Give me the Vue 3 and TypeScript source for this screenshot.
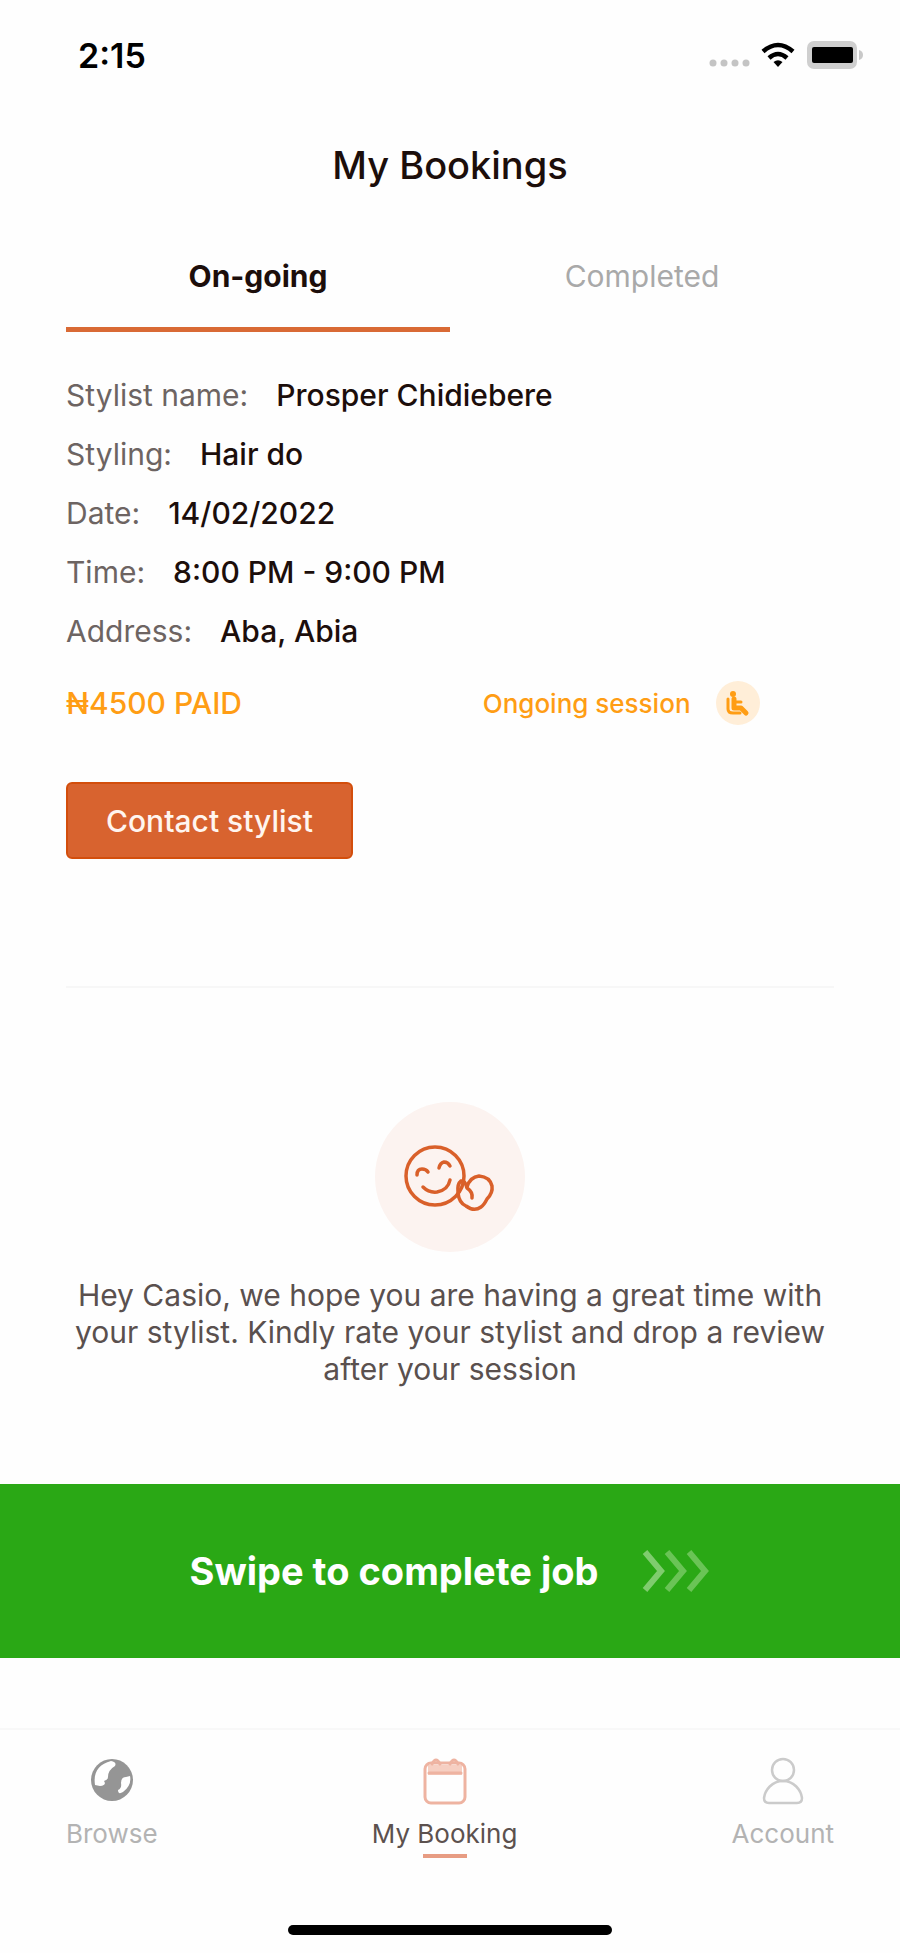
<script setup lang="ts">
import { ref } from 'vue'

interface Detail {
  label: string
  value: string
}

const tabs = ['On-going', 'Completed']
const activeTab = ref('On-going')

const details: Detail[] = [
  { label: 'Stylist name:', value: 'Prosper Chidiebere' },
  { label: 'Styling:', value: 'Hair do' },
  { label: 'Date:', value: '14/02/2022' },
  { label: 'Time:', value: '8:00 PM - 9:00 PM' },
  { label: 'Address:', value: 'Aba, Abia' },
]
</script>

<template>
  <div class="screen">
    <header class="status-bar">
      <span class="clock">2:15</span>
      <div class="status-icons">
        <svg width="42" height="26" viewBox="0 0 42 26" aria-hidden="true">
          <g fill="#c4c4c4">
            <circle cx="5" cy="21" r="3.500" /><circle cx="16" cy="21" r="3.500" />
            <circle cx="27" cy="21" r="3.500" /><circle cx="38" cy="21" r="3.500" />
          </g>
        </svg>
        <svg width="34" height="26" viewBox="0 0 34 26" aria-hidden="true">
          <g fill="none" stroke="#000" stroke-width="4.500">
            <path d="M2 9.500Q17-3.500 32 9.500" />
            <path d="M8 16Q17 8 26 16" />
          </g>
          <path d="M12.500 20Q17 16.500 21.500 20L17 25Z" />
        </svg>
        <svg width="58" height="30" viewBox="0 0 58 30" aria-hidden="true">
          <rect x="1" y="1" width="50" height="28" rx="7" fill="#cfcfcf" />
          <rect x="6" y="7" width="41" height="16" rx="2" fill="#000" />
          <path d="M53 10Q57 11 57 15T53 20Z" fill="#c9c9c9" />
        </svg>
      </div>
    </header>

    <h1 class="title">My Bookings</h1>

    <main class="content">
      <div class="tabs" role="tablist">
        <button
          v-for="tab in tabs"
          :key="tab"
          type="button"
          role="tab"
          class="tab"
          :class="{ active: tab === activeTab }"
          :aria-selected="tab === activeTab"
          @click="activeTab = tab"
        >
          {{ tab }}
        </button>
      </div>

      <dl class="details">
        <div v-for="d in details" :key="d.label" class="detail">
          <dt>{{ d.label }}</dt>
          <dd>{{ d.value }}</dd>
        </div>
      </dl>

      <div class="payment">
        <span class="paid">₦4500 PAID</span>
        <span class="session">
          Ongoing session
          <svg width="46" height="46" viewBox="0 0 46 46" aria-hidden="true">
            <circle cx="23" cy="23" r="22" fill="#ffeed8" />
            <g fill="none" stroke="#ff9d14" stroke-linecap="round" stroke-linejoin="round">
              <path d="M13 19V29Q13 33 18 33H25" stroke-width="3" />
              <path d="M19 19V28H26L31 33" stroke-width="5" />
              <path d="M20 22H26" stroke-width="3" />
            </g>
            <circle cx="18" cy="14" r="3" fill="#ff9d14" />
          </svg>
        </span>
      </div>

      <button type="button" class="contact">Contact stylist</button>

      <hr class="divider" />

      <section class="review">
        <svg width="150" height="150" viewBox="0 0 150 150" aria-hidden="true">
          <circle cx="75" cy="75" r="75" fill="#fcf3f0" />
          <g fill="none" stroke="#d9602a" stroke-width="3.500" stroke-linecap="round" stroke-linejoin="round">
            <circle cx="60" cy="74" r="29" />
            <path d="M42 73Q42 67 47 67Q51 67 53 70" />
            <path d="M64 66Q65 61 69 60Q73 60 75 64" />
            <path d="M48 85Q54 91 62 90Q73 88 75 78" />
            <path d="M97 96Q98 90 92 86Q90 78 86 79Q82 82 83 91Q84 101 91 104Q99 110 106 105Q109 103 112 97Q118 91 117 84Q115 75 104 74Q95 75 92 85" />
          </g>
        </svg>
        <p>Hey Casio, we hope you are having a great time with your stylist. Kindly rate your stylist and drop a review after your session</p>
      </section>
    </main>

    <button type="button" class="swipe">
      Swipe to complete job
      <svg width="68" height="46" viewBox="0 0 68 46" aria-hidden="true">
        <g fill="none" stroke-width="6">
          <path d="M3 4L19 23L3 42" stroke="#7fcc6e" />
          <path d="M25 4L41 23L25 42" stroke="#6ac456" />
          <path d="M47 4L63 23L47 42" stroke="#6ac456" />
        </g>
      </svg>
    </button>

    <nav class="bottom-nav" aria-label="Main">
      <a href="#browse" class="nav-item">
        <svg width="44" height="48" viewBox="0 0 44 48" aria-hidden="true">
          <circle cx="22" cy="23" r="21" fill="#959595" />
          <path d="M5 28C3 15 9 7 21 4Q27 5 25 9Q18 13 18 20Q18 23 14 24Q17 28 10 29Z" fill="#fff" />
          <path d="M40 19Q42 28 33 35Q28 38 28 33Q32 31 31 26Q31 20 36 20Z" fill="#fff" />
        </svg>
        <span>Browse</span>
      </a>
      <a href="#bookings" class="nav-item current" aria-current="page">
        <svg width="44" height="48" viewBox="0 0 44 48" aria-hidden="true">
          <path d="M5 8H39V18H5Z" fill="#f6cfc2" />
          <g fill="none" stroke="#eeb3a1" stroke-width="3" stroke-linecap="round" stroke-linejoin="round">
            <rect x="2" y="6" width="40" height="40" rx="6" />
            <path d="M9 7Q13-1 17 7M27 7Q31-1 35 7M6 16H38" />
          </g>
        </svg>
        <span>My Booking</span>
      </a>
      <a href="#account" class="nav-item">
        <svg width="44" height="48" viewBox="0 0 44 48" aria-hidden="true">
          <g fill="none" stroke="#cbcbcb" stroke-width="2.500">
            <circle cx="22" cy="13" r="11" />
            <path d="M22 24C11 24 4 33 3 41Q3 46 8 46H36Q41 46 41 41C40 33 33 24 22 24Z" />
          </g>
        </svg>
        <span>Account</span>
      </a>
    </nav>

    <div class="home-indicator"></div>
  </div>
</template>

<style>
body {
  background: #fefefe;
}
</style>

<style scoped>
.screen {
  display: flex;
  flex-direction: column;
  font-family: Inter, "Liberation Sans", sans-serif;
  font-size: 30px;
  color: #1c0e0b;
}

button {
  font: inherit;
  border: 0;
  background: none;
  cursor: pointer;
}

.status-bar {
  display: flex;
  align-items: center;
  justify-content: space-between;
  height: 46px;
  margin-top: 32px;
  padding: 0 36px 0 78px;
}

.clock {
  font-size: 34px;
  font-weight: 600;
  color: #000;
}

.status-icons {
  display: flex;
  align-items: center;
  gap: 11px;
}

.title {
  margin: 62px 0 0;
  font-size: 38px;
  line-height: 50px;
  font-weight: 500;
  text-align: center;
}

.content {
  padding: 0 66px;
}

.tabs {
  display: grid;
  grid-template-columns: 1fr 1fr;
  margin-top: 54px;
}

.tab {
  height: 88px;
  padding: 0 0 20px;
  border-bottom: 5px solid transparent;
  color: #a9a9a9;
}

.tab.active {
  border-color: #d96a35;
  font-weight: 700;
  color: #1c0e0b;
}

.details {
  display: flex;
  flex-direction: column;
  gap: 19px;
  margin: 43px 0 0;
  line-height: 40px;
}

.detail {
  display: flex;
  gap: 28px;
}

.detail dt {
  color: #6d6462;
}

.detail dd {
  margin: 0;
  font-weight: 500;
}

.payment {
  display: grid;
  grid-template-columns: 54% 46%;
  align-items: center;
  margin-top: 29px;
  font-weight: 500;
  color: #ff9d14;
}

.session {
  display: flex;
  align-items: center;
  gap: 24px;
  padding-left: 2px;
  font-size: 26px;
  white-space: nowrap;
}

.contact {
  display: block;
  height: 77px;
  margin-top: 56px;
  padding: 0 38px;
  border: 2px solid #d34e0c;
  border-radius: 6px;
  background: #d8632f;
  font-weight: 500;
  color: #fff5ef;
}

.divider {
  height: 2px;
  margin: 127px 0 0;
  border: 0;
  background: #f7f7f7;
}

.review {
  display: flex;
  flex-direction: column;
  align-items: center;
  margin-top: 114px;
}

.review p {
  margin: 25px 0 0;
  line-height: 37px;
  text-align: center;
  color: #5a504e;
}

.swipe {
  display: flex;
  align-items: center;
  justify-content: center;
  gap: 44px;
  height: 174px;
  margin-top: 96px;
  padding: 0;
  background: #2aa815;
  font-size: 38px;
  font-weight: 700;
  color: #fff;
}

.bottom-nav {
  display: flex;
  justify-content: space-between;
  margin-top: 70px;
  padding: 27px 66px 0;
  border-top: 2px solid #f8f8f8;
}

.nav-item {
  display: flex;
  flex-direction: column;
  align-items: center;
  gap: 11px;
  font-size: 26px;
  line-height: 36px;
  text-decoration: none;
  color: #b3b3b3;
}

.nav-item.current {
  color: #5c514e;
}

.nav-item.current::after {
  content: "";
  width: 44px;
  height: 4px;
  margin-top: -9px;
  background: #e79c83;
}

.home-indicator {
  width: 36%;
  height: 10px;
  margin: 67px auto 18px;
  border-radius: 5px;
  background: #000;
}
</style>
